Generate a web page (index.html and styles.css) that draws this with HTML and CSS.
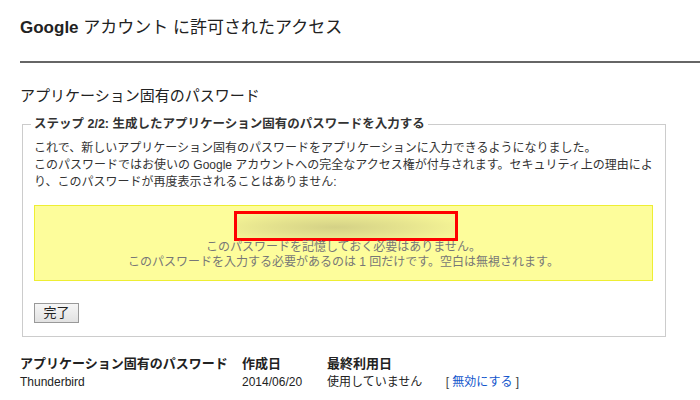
FILE: index.html
```html
<!DOCTYPE html>
<html lang="ja">
<head>
    <meta charset="UTF-8">
    <title>Google アカウント に許可されたアクセス</title>
    <link rel="stylesheet" href="styles.css">
</head>
<body>
    <h1 class="page-title"><b>Google</b> アカウント に許可されたアクセス</h1>
    <hr class="title-rule">

    <h2 class="section-title">アプリケーション固有のパスワード</h2>

    <!-- ステップ 2 -->
    <fieldset class="step">
        <legend>ステップ 2/2: 生成したアプリケーション固有のパスワードを入力する</legend>
        <p class="step-text">
            これで、新しいアプリケーション固有のパスワードをアプリケーションに入力できるようになりました。<br>
            このパスワードではお使いの Google アカウントへの完全なアクセス権が付与されます。セキュリティ上の理由によ<br>
            り、このパスワードが再度表示されることはありません:
        </p>

        <div class="password-box">
            <div class="password-value"><span class="blur">abcd efgh ijkl mnop</span></div>
            <p class="password-note">
                このパスワードを記憶しておく必要はありません。<br>
                このパスワードを入力する必要があるのは 1 回だけです。空白は無視されます。
            </p>
        </div>

        <button class="done-btn">完了</button>
    </fieldset>

    <!-- 一覧 -->
    <div class="app-list">
        <div class="app-row app-head">
            <span>アプリケーション固有のパスワード</span>
            <span>作成日</span>
            <span>最終利用日</span>
        </div>
        <div class="app-row">
            <span>Thunderbird</span>
            <span>2014/06/20</span>
            <span>使用していません <span class="revoke">[ <a href="#">無効にする</a> ]</span></span>
        </div>
    </div>
</body>
</html>
```

FILE: styles.css
```css
body {
    font-family: "Liberation Sans", Arial, "Noto Sans CJK JP", sans-serif;
    color: #222;
    background: #fff;
    margin: 0;
    padding: 0 20px;
}

.page-title {
    font-size: 17px;
    font-weight: normal;
    line-height: 24px;
    margin: 16px 0 0;
}

.page-title b {
    font-weight: bold;
}

.title-rule {
    border: none;
    border-top: 2px solid #666;
    margin: 21px -20px 0 0;
}

.section-title {
    font-size: 15px;
    font-weight: normal;
    line-height: 20px;
    margin: 23px 0 0;
}

.step {
    border: 1px solid #ccc;
    margin: 10px 33px 0 2px;
    padding: 7px 12px 13px 11px;
}

.step legend {
    font-size: 12.5px;
    font-weight: bold;
    line-height: 17px;
    padding: 0 3px;
    margin-left: -3px;
    color: #333;
}

.step-text {
    font-size: 12px;
    line-height: 17px;
    color: #333;
    margin: 0;
    white-space: nowrap;
}

.password-box {
    background: #fdfd9b;
    border: 1px solid #eeee33;
    margin-top: 14px;
    padding: 5px 0 10px;
    text-align: center;
}

.password-value {
    width: 218px;
    height: 24px;
    margin: 0 0 0 calc(50% - 109px);
    border: 3px solid #ff0000;
    background: radial-gradient(ellipse 60% 70% at 45% 55%, #d4d186 0%, #e4e28e 50%, #f6f596 100%);
    overflow: hidden;
}

.password-value .blur {
    color: transparent;
}

.password-note {
    font-size: 12px;
    line-height: 15px;
    color: #777;
    margin: -1px 0 0;
}

.done-btn {
    font-family: inherit;
    font-size: 13px;
    line-height: 16px;
    width: 45px;
    height: 20px;
    padding: 0;
    margin-top: 22px;
    color: #222;
    background: linear-gradient(#f6f6f6, #e2e2e2);
    border: 1px solid #999;
    border-radius: 0;
    display: block;
}

.app-list {
    margin-top: 18px;
    font-size: 12px;
}

.app-row {
    display: grid;
    grid-template-columns: 222px 85px auto;
    line-height: 18px;
}

.app-head {
    font-weight: bold;
    font-size: 13px;
}

.revoke {
    margin-left: 20px;
    color: #444;
}

.revoke a {
    color: #1155cc;
    text-decoration: none;
}
```
